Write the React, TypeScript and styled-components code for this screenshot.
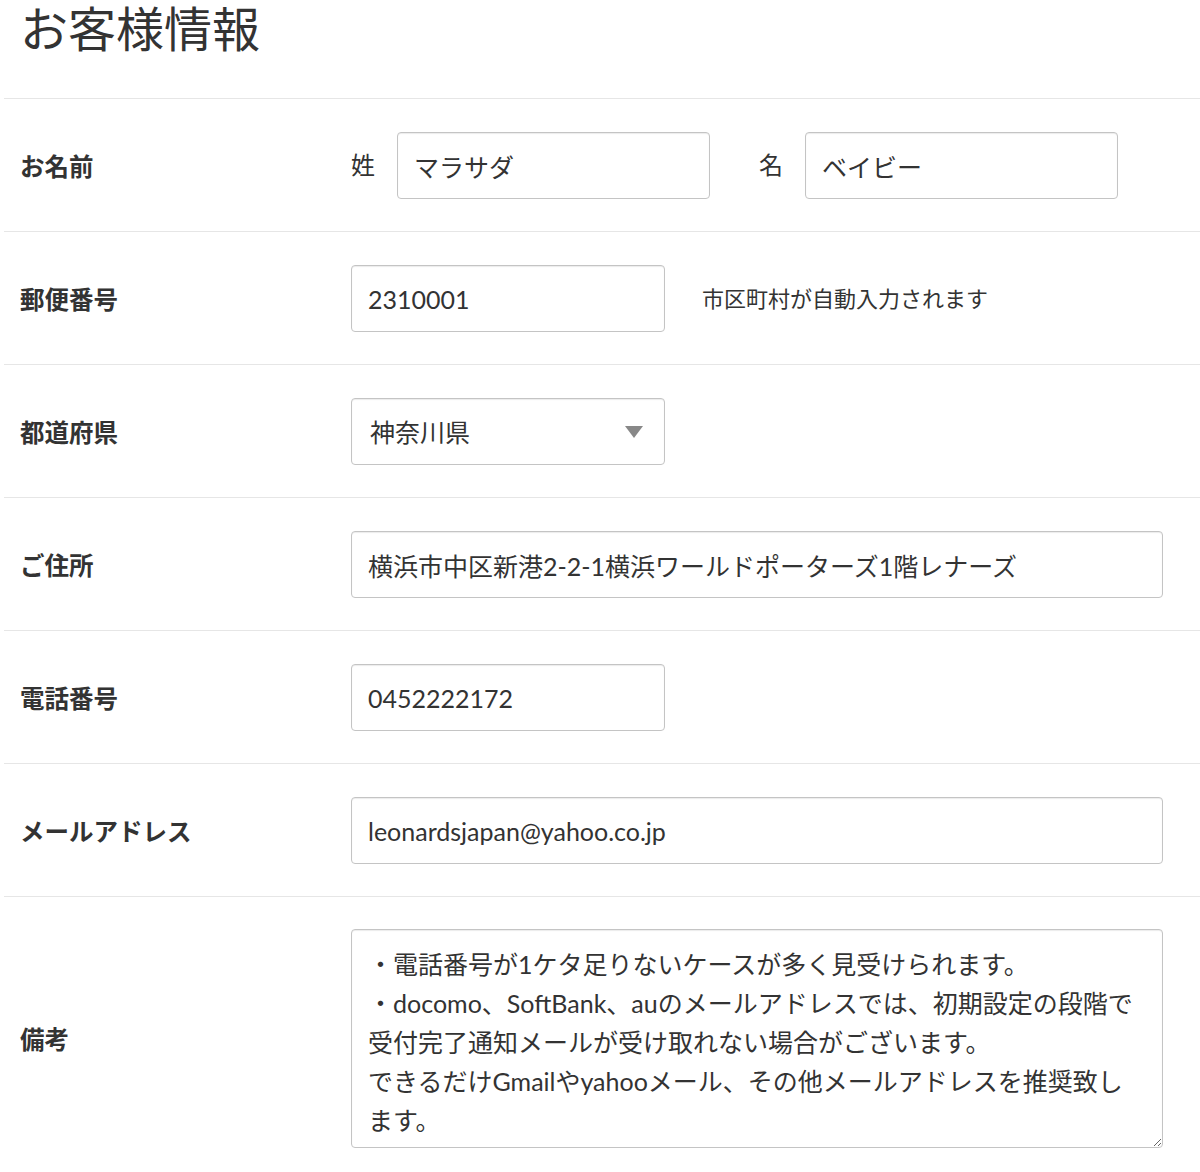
import styled, { createGlobalStyle } from 'styled-components';

const GlobalStyle = createGlobalStyle`
    body {
        margin: 0;
        background: #fff;
        color: #333;
        font-family: Lato, "Noto Sans CJK JP", sans-serif;
    }
`;

const remarks =
    '・電話番号が1ケタ足りないケースが多く見受けられます。\n' +
    '・docomo、SoftBank、auのメールアドレスでは、初期設定の段階で\n' +
    '受付完了通知メールが受け取れない場合がございます。\n' +
    'できるだけGmailやyahooメール、その他メールアドレスを推奨致し\n' +
    'ます。';

const App: React.FC = () => {
    return (
        <>
            <GlobalStyle />
            <Page>
                <Title>お客様情報</Title>
                <Form>
                    <Row>
                        <Label>お名前</Label>
                        <NameGroup>
                            <SubLabel>姓</SubLabel>
                            <Input width={313} defaultValue="マラサダ" />
                            <SubLabel>名</SubLabel>
                            <Input width={313} defaultValue="ベイビー" />
                        </NameGroup>
                    </Row>
                    <Row>
                        <Label>郵便番号</Label>
                        <Field>
                            <Input width={314} defaultValue="2310001" />
                            <Hint>市区町村が自動入力されます</Hint>
                        </Field>
                    </Row>
                    <Row>
                        <Label>都道府県</Label>
                        <Field>
                            <SelectWrap>
                                <Select defaultValue="神奈川県">
                                    <option>東京都</option>
                                    <option>神奈川県</option>
                                    <option>千葉県</option>
                                    <option>埼玉県</option>
                                </Select>
                                <Caret />
                            </SelectWrap>
                        </Field>
                    </Row>
                    <Row>
                        <Label>ご住所</Label>
                        <Field>
                            <Input defaultValue="横浜市中区新港2-2-1横浜ワールドポーターズ1階レナーズ" />
                        </Field>
                    </Row>
                    <Row>
                        <Label>電話番号</Label>
                        <Field>
                            <Input width={314} defaultValue="0452222172" />
                        </Field>
                    </Row>
                    <Row>
                        <Label>メールアドレス</Label>
                        <Field>
                            <Input defaultValue="leonardsjapan@yahoo.co.jp" />
                        </Field>
                    </Row>
                    <Row last>
                        <Label>備考</Label>
                        <Field>
                            <TextArea defaultValue={remarks} />
                        </Field>
                    </Row>
                </Form>
            </Page>
        </>
    );
};

export default App;

const Page = styled.div`
    width: 1200px;
`;

const Title = styled.h1`
    margin: 0 0 40px;
    padding-left: 20px;
    font-size: 48px;
    font-weight: 400;
    line-height: 58px;
    color: #333;
`;

const Form = styled.div`
    margin-left: 4px;
`;

const Row = styled.div<{ last?: boolean }>`
    display: grid;
    grid-template-columns: 331px 812px;
    align-items: center;
    padding: ${({ last }) => (last ? '32px' : '33px')} 0 32px 16px;
    border-top: 1px solid #e6e6e6;
`;

const Label = styled.div`
    font-size: 24.5px;
    font-weight: 700;
    color: #333;
`;

const Field = styled.div`
    display: flex;
    align-items: center;
    gap: 37px;
`;

const NameGroup = styled.div`
    display: flex;
    align-items: center;

    & > input:nth-of-type(1) {
        margin-right: 49px;
    }
`;

const SubLabel = styled.span`
    font-size: 24px;
    color: #333;
    margin-right: 22px;
    margin-top: -4px;
`;

const controlStyle = `
    box-sizing: border-box;
    border: 1px solid #c4c4c4;
    border-radius: 4px;
    box-shadow: inset 0 1px 1px rgba(0, 0, 0, 0.08);
    background: #fff;
    color: #333;
    font-family: Lato, "Noto Sans CJK JP", sans-serif;
    font-size: 25px;
    outline: none;
`;

const Input = styled.input<{ width?: number }>`
    ${controlStyle}
    width: ${({ width }) => (width ? `${width}px` : '100%')};
    height: 67px;
    padding: 0 16px;
`;

const Hint = styled.span`
    font-size: 22px;
    color: #333;
    margin-top: -4px;
`;

const SelectWrap = styled.div`
    position: relative;
    width: 314px;
`;

const Select = styled.select`
    ${controlStyle}
    appearance: none;
    width: 100%;
    height: 67px;
    padding: 0 16px 0 18px;
`;

const Caret = styled.span`
    position: absolute;
    top: 28px;
    right: 22px;
    width: 0;
    height: 0;
    border-left: 9px solid transparent;
    border-right: 9px solid transparent;
    border-top: 12px solid #888;
    pointer-events: none;
`;

const TextArea = styled.textarea`
    ${controlStyle}
    width: 100%;
    height: 219px;
    padding: 15px 16px;
    line-height: 39px;
    white-space: pre-wrap;
    resize: vertical;
    overflow: hidden;
`;
